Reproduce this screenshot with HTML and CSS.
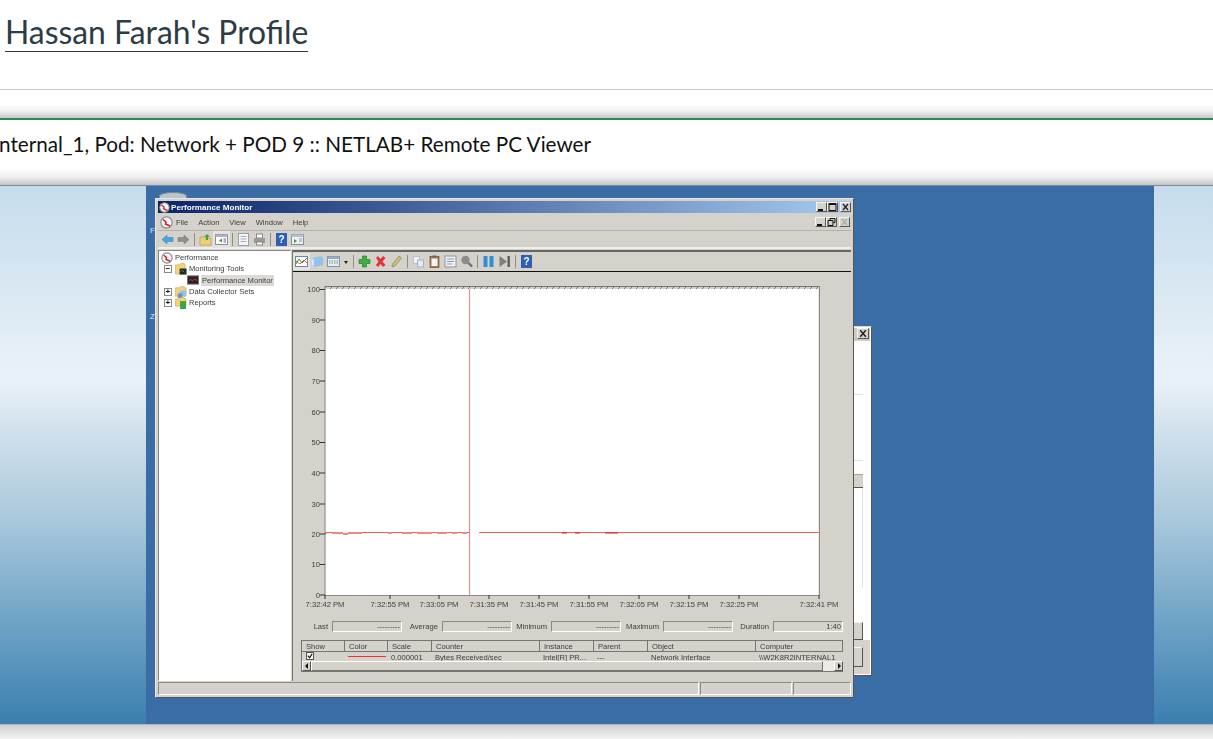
FILE: index.html
```html
<!DOCTYPE html>
<html lang="en">
<head>
    <meta charset="UTF-8">
    <meta name="viewport" content="width=device-width, initial-scale=1.0">
    <title>Hassan Farah's Profile</title>
    <link rel="stylesheet" href="styles.css">
</head>
<body>
    <!-- icon sheet -->
    <svg class="defs" width="0" height="0">
        <defs>
            <pattern id="hatch" width="6" height="3" patternUnits="userSpaceOnUse">
                <path d="M0 3 L3 0" stroke="#777" stroke-width="1" fill="none"/>
            </pattern>
        </defs>
        <symbol id="i-perf" viewBox="0 0 13 13"><circle cx="6.5" cy="6.5" r="5.6" fill="#f4f4f4" stroke="#8c8c8c" stroke-width="1.2"/><path d="M3 3.5 L6 6 L5.5 8 L10 10" fill="none" stroke="#d8202a" stroke-width="1.6"/></symbol>
        <symbol id="i-back" viewBox="0 0 13 13"><path d="M1 6.5 L6 2 V4.5 H12 V8.5 H6 V11 Z" fill="#4ba3e3" stroke="#2f7fbf" stroke-width=".5"/></symbol>
        <symbol id="i-fwd" viewBox="0 0 13 13"><path d="M12 6.5 L7 2 V4.5 H1 V8.5 H7 V11 Z" fill="#8f8f8f" stroke="#777" stroke-width=".5"/></symbol>
        <symbol id="i-up" viewBox="0 0 13 13"><path d="M1 4 H5 L6 5.5 H12 V12 H1 Z" fill="#efcf74" stroke="#b8963c" stroke-width=".6"/><path d="M8 1 L11 4 H9 V7 H7 V4 H5 Z" fill="#3da63d"/></symbol>
        <symbol id="i-tree" viewBox="0 0 13 13"><rect x=".5" y="1.5" width="12" height="10" fill="#fff" stroke="#8a8f96"/><rect x=".5" y="1.5" width="12" height="2.5" fill="#aeb6c2"/><path d="M4 7.5 L7 5.5 V9.5 Z" fill="#37a037"/><rect x="8.5" y="5" width="2.5" height="5" fill="#9fb4cc"/></symbol>
        <symbol id="i-sheet" viewBox="0 0 13 13"><rect x="1.5" y=".5" width="10" height="12" fill="#f6f6f6" stroke="#9aa0a8"/><path d="M3.5 3.5 H9.5 M3.5 6 H9.5 M3.5 8.5 H9.5" stroke="#9db0c6"/></symbol>
        <symbol id="i-print" viewBox="0 0 13 13"><rect x="3.5" y="1" width="6" height="4" fill="#fff" stroke="#888"/><rect x="1" y="5" width="11" height="5" fill="#999"/><rect x="3.5" y="9" width="6" height="3" fill="#fff" stroke="#888"/></symbol>
        <symbol id="i-mmc" viewBox="0 0 13 13"><rect x=".5" y="1.5" width="12" height="10" fill="#eef1f4" stroke="#8a8f96"/><rect x=".5" y="1.5" width="12" height="2.5" fill="#b9c0ca"/><path d="M3 6 L6 8 L3 10 Z" fill="#37a037"/><path d="M8 6 H11 M8 8 H11" stroke="#8a9bb2"/></symbol>
        <symbol id="i-graph" viewBox="0 0 13 13"><rect x=".5" y="1.5" width="12" height="10" fill="#fff" stroke="#6c86a6"/><path d="M1 9 L4 4 L7 8 L12 3" fill="none" stroke="#2c9a38"/><path d="M1 6 L5 9 L9 5 L12 8" fill="none" stroke="#d8302a" stroke-width=".8"/></symbol>
        <symbol id="i-histo" viewBox="0 0 13 13"><path d="M1 3 L10 1 L12 3 V10 L3 12 L1 10 Z" fill="#8fc3ea"/><path d="M1 3 L3 5 V12 L1 10 Z" fill="#d2e6f5"/></symbol>
        <symbol id="i-report" viewBox="0 0 13 13"><rect x=".5" y="1.5" width="12" height="10" fill="#e9edf3" stroke="#7f94b0"/><rect x=".5" y="1.5" width="12" height="2.5" fill="#9aa8bd"/><path d="M2 6 H11 M2 8 H11" stroke="#5aa05a" stroke-dasharray="1.5 1"/></symbol>
        <symbol id="i-add" viewBox="0 0 13 13"><path d="M4.500 1 H8.500 V4.500 H12 V8.500 H8.500 V12 H4.500 V8.500 H1 V4.500 H4.500 Z" fill="#3cb043" stroke="#25802c" stroke-width=".7"/></symbol>
        <symbol id="i-del" viewBox="0 0 13 13"><path d="M2 3 L4 1 L6.500 4 L9 1 L11.500 3 L8.500 6.500 L11.500 10 L9 12 L6.500 9 L4 12 L2 10 L4.500 6.500 Z" fill="#e2333a"/></symbol>
        <symbol id="i-pen" viewBox="0 0 13 13"><path d="M9 1 L11.500 3 L5 11 L2 12 L2.500 9 Z" fill="#c9c65a" stroke="#7d8a96" stroke-width=".8"/></symbol>
        <symbol id="i-copy" viewBox="0 0 13 13"><rect x="1.500" y="1.500" width="6" height="7" fill="#f3f3f3" stroke="#bcc0c6"/><rect x="5.500" y="5" width="6" height="7" fill="#e2e9f2" stroke="#a5b3c6"/></symbol>
        <symbol id="i-paste" viewBox="0 0 13 13"><rect x="2" y="1.500" width="9" height="11" fill="#a9794b" stroke="#6f4f30" stroke-width=".7"/><rect x="3.500" y="3.500" width="6" height="7.500" fill="#f4f4f4"/><rect x="4.500" y=".5" width="4" height="2" fill="#666"/></symbol>
        <symbol id="i-props" viewBox="0 0 13 13"><rect x="1" y="1" width="11" height="11" fill="#eceef1" stroke="#8f959e"/><path d="M3 4 H10 M3 6.500 H10 M3 9 H8" stroke="#8aa1bd"/></symbol>
        <symbol id="i-zoom" viewBox="0 0 13 13"><circle cx="5.500" cy="5" r="4.200" fill="#8c8c8c"/><path d="M8.500 8 L12 11.500" stroke="#6d6d6d" stroke-width="2.400"/></symbol>
        <symbol id="i-pause" viewBox="0 0 13 13"><rect x="1.500" y="1" width="4" height="11" fill="#2f8fd0"/><rect x="7.500" y="1" width="4" height="11" fill="#2f8fd0"/></symbol>
        <symbol id="i-next" viewBox="0 0 13 13"><path d="M1.500 1 L9 6.500 L1.500 12 Z" fill="#7f7f7f"/><rect x="9.500" y="1" width="2.400" height="11" fill="#5d5d5d"/></symbol>
        <symbol id="i-mon" viewBox="0 0 13 13"><path d="M.5 2 H5 L6 .5 H10 V2 H11 V12 H.5 Z" fill="#f2d27a" stroke="#c2a24d" stroke-width=".6"/><rect x="5" y="6" width="7.500" height="6.500" fill="#1e2a24"/><path d="M6 9 L8 8 L10 10" stroke="#5fd35f" fill="none" stroke-width=".7"/></symbol>
        <symbol id="i-pmon" viewBox="0 0 13 13"><rect x=".5" y="2" width="12" height="9" fill="#2b2322" stroke="#777"/><path d="M2 7 L4 6 L6 7.500 L8 5.500 L11 7" stroke="#e03a3a" fill="none"/></symbol>
        <symbol id="i-sets" viewBox="0 0 13 13"><path d="M.5 2 H5 L6 .5 H10 V2 H12 V11 H.5 Z" fill="#f2d27a" stroke="#c2a24d" stroke-width=".6"/><rect x="5" y="5" width="7" height="6" fill="#8fc3ea"/><rect x="3" y="8" width="5" height="5" fill="#5c9bd0"/></symbol>
        <symbol id="i-reports" viewBox="0 0 13 13"><path d="M.5 2 H5 L6 .5 H10 V2 H12 V10 H.5 Z" fill="#f2d27a" stroke="#c2a24d" stroke-width=".6"/><rect x="6" y="5" width="5.500" height="8" fill="#2fae3f" stroke="#1d7a2a" stroke-width=".5"/></symbol>
        <symbol id="g-min" viewBox="0 0 9 8"><rect x="1" y="6" width="5" height="2" fill="#111"/></symbol>
        <symbol id="g-max" viewBox="0 0 9 8"><path d="M1 .5 H8 V7.500 H1 Z M1 1.500 H8" fill="none" stroke="#111"/></symbol>
        <symbol id="g-close" viewBox="0 0 9 8"><path d="M2 1 L7 7 M7 1 L2 7" stroke="#222" stroke-width="1.300"/></symbol>
        <symbol id="g-closeoff" viewBox="0 0 9 8"><path d="M2 1 L7 7 M7 1 L2 7" stroke="#aaa" stroke-width="1.300"/></symbol>
        <symbol id="g-restore" viewBox="0 0 9 8"><path d="M3 2 V.5 H8 V4.500 H6.500 M1 2.500 H6 V7.500 H1 Z" fill="none" stroke="#111"/></symbol>
        <symbol id="g-check" viewBox="0 0 7 7"><path d="M1 3 L3 5.500 L6 1" fill="none" stroke="#111" stroke-width="1.400"/></symbol>
    </svg>

    <header class="profile-head">
        <h1><a href="#">Hassan Farah's Profile</a></h1>
    </header>
    <div class="shade"></div>

    <section class="viewer">
        <div class="viewer-title">nternal_1, Pod: Network + POD 9 :: NETLAB+ Remote PC Viewer</div>

        <div class="stage">
            <div class="band band-left"></div>
            <div class="desktop">
                <div class="bin"></div>
                <span class="desk-label label-f">F</span>
                <span class="desk-label label-z">Z</span>

                <!-- window behind perfmon -->
                <div class="back-win">
                    <div class="back-title"><span class="cap-btn"><svg><use href="#g-close"/></svg></span></div>
                    <div class="back-body">
                        <div class="back-rule rule-a"></div>
                        <div class="back-rule rule-b"></div>
                        <div class="back-box"></div>
                        <div class="back-line"></div>
                        <div class="back-btn btn-a"></div>
                    </div>
                    <div class="back-foot">
                        <div class="back-btn btn-b"></div>
                    </div>
                </div>

                <div class="win">
                    <div class="win-title">
                        <svg class="ic"><use href="#i-perf"/></svg>
                        <span class="win-name">Performance Monitor</span>
                        <div class="cap-btns">
                            <span class="cap-btn"><svg><use href="#g-min"/></svg></span>
                            <span class="cap-btn"><svg><use href="#g-max"/></svg></span>
                            <span class="cap-btn gap-left"><svg><use href="#g-close"/></svg></span>
                        </div>
                    </div>

                    <div class="menubar">
                        <svg class="ic menu-ic"><use href="#i-perf"/></svg>
                        <span>File</span>
                        <span>Action</span>
                        <span>View</span>
                        <span>Window</span>
                        <span>Help</span>
                        <div class="cap-btns mdi-btns">
                            <span class="cap-btn"><svg><use href="#g-min"/></svg></span>
                            <span class="cap-btn"><svg><use href="#g-restore"/></svg></span>
                            <span class="cap-btn gap-left"><svg><use href="#g-closeoff"/></svg></span>
                        </div>
                    </div>

                    <div class="toolbar main-bar">
                        <svg class="ic"><use href="#i-back"/></svg>
                        <svg class="ic"><use href="#i-fwd"/></svg>
                        <i class="sep"></i>
                        <svg class="ic"><use href="#i-up"/></svg>
                        <svg class="ic on"><use href="#i-tree"/></svg>
                        <i class="sep"></i>
                        <svg class="ic"><use href="#i-sheet"/></svg>
                        <svg class="ic"><use href="#i-print"/></svg>
                        <i class="sep"></i>
                        <span class="help-ic">?</span>
                        <svg class="ic"><use href="#i-mmc"/></svg>
                    </div>

                    <div class="panes">
                        <div class="tree">
                            <div class="node"><svg class="ic"><use href="#i-perf"/></svg>Performance</div>
                            <div class="node lvl1"><b class="exp">&minus;</b><svg class="ic"><use href="#i-mon"/></svg>Monitoring Tools</div>
                            <div class="node lvl2"><svg class="ic"><use href="#i-pmon"/></svg><span class="picked">Performance Monitor</span></div>
                            <div class="node lvl1"><b class="exp">+</b><svg class="ic"><use href="#i-sets"/></svg>Data Collector Sets</div>
                            <div class="node lvl1"><b class="exp">+</b><svg class="ic"><use href="#i-reports"/></svg>Reports</div>
                        </div>

                        <div class="pane">
                            <div class="toolbar pane-bar">
                                <svg class="ic on"><use href="#i-graph"/></svg>
                                <svg class="ic"><use href="#i-histo"/></svg>
                                <svg class="ic"><use href="#i-report"/></svg>
                                <i class="caret"></i>
                                <i class="sep"></i>
                                <svg class="ic"><use href="#i-add"/></svg>
                                <svg class="ic"><use href="#i-del"/></svg>
                                <svg class="ic"><use href="#i-pen"/></svg>
                                <i class="sep"></i>
                                <svg class="ic"><use href="#i-copy"/></svg>
                                <svg class="ic"><use href="#i-paste"/></svg>
                                <svg class="ic"><use href="#i-props"/></svg>
                                <svg class="ic"><use href="#i-zoom"/></svg>
                                <i class="sep"></i>
                                <svg class="ic"><use href="#i-pause"/></svg>
                                <svg class="ic"><use href="#i-next"/></svg>
                                <i class="sep"></i>
                                <span class="help-ic">?</span>
                            </div>

                            <svg class="chart" width="558" height="340" viewBox="0 0 558 340">
                                <rect x="32" y="14" width="494" height="3" fill="url(#hatch)"/>
                                <path d="M32 14.500 H526" stroke="#777"/>
                                <rect x="32.500" y="17" width="493" height="306" fill="#fff"/>
                                <path d="M32 14 V323.500 H526.500 V14" fill="none" stroke="#8a8a8a"/>
                                <path class="ticks" d="M27 17.500 H32 M27 48 H32 M27 78.500 H32 M27 109 H32 M27 140 H32 M27 170.500 H32 M27 201 H32 M27 232 H32 M27 262 H32 M27 292.500 H32 M27 323 H32 M32 323 V327 M97 323 V327 M146 323 V327 M196 323 V327 M246 323 V327 M296 323 V327 M346 323 V327 M396 323 V327 M446 323 V327 M526 323 V327"/>
                                <path d="M176.500 17 V323" stroke="#ea8e96" stroke-width="1.200"/>
                                <path d="M32 261 H34 M39 261 H50 M55 261 H69 M95 261 H99 M109 261 H119 M124 261 H139 M144 261 H154 M159 261 H164 M169 261 H174" stroke="#e81010" fill="none" stroke-width="1.200"/>
                                <path d="M50 262 H55" stroke="#e81010"/>
                                <path d="M34 260.500 H39 M69 260.500 H95 M99 260.500 H109 M119 260.500 H124 M139 260.500 H144 M154 260.500 H159 M164 260.500 H169 M174 260.500 H176 M186 260.500 H526" stroke="#ff5a5a" fill="none" stroke-width="1.200"/>
                                <path d="M269 261 H274 M282 261 H287 M312 261 H325" stroke="#e81010"/>
                                <g class="y-labels">
                                    <text x="27" y="20">100</text><text x="27" y="51">90</text><text x="27" y="81">80</text><text x="27" y="112">70</text><text x="27" y="143">60</text><text x="27" y="173">50</text><text x="27" y="204">40</text><text x="27" y="235">30</text><text x="27" y="265">20</text><text x="27" y="295">10</text><text x="27" y="326">0</text>
                                </g>
                                <g class="x-labels">
                                    <text x="32" y="335">7:32:42 PM</text><text x="97" y="335">7:32:55 PM</text><text x="146" y="335">7:33:05 PM</text><text x="196" y="335">7:31:35 PM</text><text x="246" y="335">7:31:45 PM</text><text x="296" y="335">7:31:55 PM</text><text x="346" y="335">7:32:05 PM</text><text x="396" y="335">7:32:15 PM</text><text x="446" y="335">7:32:25 PM</text><text x="526" y="335">7:32:41 PM</text>
                                </g>
                            </svg>

                            <div class="stats">
                                <div class="stat"><span>Last</span><span class="val">---------</span></div>
                                <div class="stat"><span>Average</span><span class="val">---------</span></div>
                                <div class="stat"><span>Minimum</span><span class="val">---------</span></div>
                                <div class="stat"><span>Maximum</span><span class="val">---------</span></div>
                                <div class="stat"><span>Duration</span><span class="val">1:40</span></div>
                            </div>

                            <div class="legend">
                                <div class="legend-grid">
                                    <div class="th">Show</div><div class="th">Color</div><div class="th">Scale</div><div class="th">Counter</div><div class="th">Instance</div><div class="th">Parent</div><div class="th">Object</div><div class="th">Computer</div>
                                    <div class="td"><span class="check"><svg><use href="#g-check"/></svg></span></div><div class="td"><span class="swatch"></span></div><div class="td">0.000001</div><div class="td">Bytes Received/sec</div><div class="td">Intel[R] PR...</div><div class="td">---</div><div class="td">Network Interface</div><div class="td clip">\\W2K8R2INTERNAL1</div>
                                </div>
                                <div class="scroll">
                                    <span class="arrow arrow-l"></span>
                                    <span class="thumb"></span>
                                    <span class="track"></span>
                                    <span class="arrow arrow-r"></span>
                                </div>
                            </div>
                        </div>
                    </div>

                    <div class="status">
                        <span class="cell cell-wide"></span>
                        <span class="cell cell-mid"></span>
                        <span class="cell cell-end"></span>
                    </div>
                </div>
            </div>
            <div class="band band-right"></div>
        </div>
    </section>
    <div class="foot"></div>
</body>
</html>
```

FILE: styles.css
```css
html, body {
    margin: 0;
    padding: 0;
    height: 739px;
    overflow: hidden;
    background: white;
}
body {
    font-family: "Lato", "Liberation Sans", sans-serif;
    color: #2d3b45;
}
.defs {
    display: block;
    height: 0;
}

/* page chrome */
.profile-head {
    height: 89px;
    border-bottom: 1px solid #cccccc;
    box-sizing: content-box;
    padding-left: 5px;
}
.profile-head h1 {
    margin: 0;
    padding-top: 13px;
    font-size: 31.850px;
    font-weight: 400;
    line-height: 38px;
}
.profile-head a {
    color: #2d3b45;
    text-decoration: none;
    border-bottom: 1px solid #2d3b45;
    display: inline-block;
    line-height: 37px;
}
.shade {
    height: 28px;
    background: linear-gradient(to bottom, #ffffff 0%, #ffffff 50%, #f0f0f0 75%, #c8c8c8 100%);
}
.viewer {
    border-top: 2px solid #2b8a4f;
}
.viewer-title {
    height: 65px;
    box-sizing: border-box;
    padding: 11px 0 0 0;
    margin-left: -1px;
    font-size: 20.700px;
    line-height: 26px;
    color: #111111;
    white-space: nowrap;
    background: linear-gradient(to bottom, #ffffff 0%, #ffffff 74%, #eeeeee 88%, #c4c4c4 100%);
}
.foot {
    height: 15px;
    border-top: 1px solid #aeb4ba;
    background: linear-gradient(to bottom, #cfcfcf, #f6f6f6);
}

/* remote desktop area */
.stage {
    display: flex;
    height: 539px;
    border-top: 1px solid #7b8b9b;
    box-sizing: border-box;
}
.band {
    background: linear-gradient(to bottom, #c6dcec 0%, #eaf2f9 36%, #cfe0ec 46%, #a9c8dc 62%, #72a5c7 80%, #3a7fb0 100%);
}
.band-left {
    width: 146px;
}
.band-right {
    width: 59px;
}
.desktop {
    position: relative;
    width: 1008px;
    background: #3a6ca5;
}
.bin {
    position: absolute;
    left: 13px;
    top: 6px;
    width: 26px;
    height: 12px;
    border-radius: 50% / 30%;
    background: #b9c4cf;
    border: 1px solid #7e8a96;
}
.desk-label {
    position: absolute;
    left: 4px;
    font: 8px "Liberation Sans", sans-serif;
    color: #dfe8f2;
}
.label-f { top: 40px; }
.label-z { top: 126px; }

/* main window */
.win {
    position: absolute;
    left: 9px;
    top: 12px;
    width: 699px;
    height: 500px;
    box-sizing: border-box;
    display: flex;
    flex-direction: column;
    padding: 2px;
    background: #d5d2cc;
    border: 1px solid;
    border-color: #e8e6e2 #555555 #555555 #e8e6e2;
    font-family: "Liberation Sans", sans-serif;
    font-size: 7.600px;
    color: #3c3c3c;
    filter: blur(0.35px);
}
.win-title {
    display: flex;
    align-items: center;
    height: 12px;
    flex: none;
    background: linear-gradient(to right, #0a246a, #a6caf0);
    color: white;
    font-weight: 700;
    font-size: 8.100px;
}
.win-title .ic {
    width: 11px;
    height: 11px;
    margin: 0 1px 0 1px;
}
.ic {
    width: 13px;
    height: 13px;
    flex: none;
}
.help-ic {
    width: 11px;
    height: 13px;
    margin: 0 1px;
    flex: none;
    background: #2f5fb0;
    color: white;
    font-size: 10px;
    font-weight: 700;
    line-height: 13px;
    text-align: center;
}
.cap-btns {
    display: flex;
    margin-left: auto;
}
.cap-btn {
    display: block;
    width: 9px;
    height: 8px;
    background: #d5d2cc;
    border: 1px solid;
    border-color: #f4f4f4 #555555 #555555 #f4f4f4;
}
.cap-btn svg {
    display: block;
    width: 9px;
    height: 8px;
}
.gap-left {
    margin-left: 2px;
}
.menubar {
    display: flex;
    align-items: center;
    gap: 10px;
    height: 17px;
    margin-top: 1px;
    padding-left: 2px;
    flex: none;
    border-bottom: 1px solid #b5b2ac;
    box-sizing: border-box;
}
.menu-ic {
    margin-right: -7px;
}
.mdi-btns {
    margin-right: 1px;
}
.toolbar {
    display: flex;
    align-items: center;
    gap: 3px;
    flex: none;
}
.main-bar {
    height: 18px;
    padding-left: 3px;
    border-bottom: 2px solid #eeeeee;
    box-sizing: border-box;
}
.ic.on {
    outline: 2px solid #e6e4e0;
    background: #e6e4e0;
}
.sep {
    width: 1px;
    height: 13px;
    margin: 0 1px;
    background: #8f8d88;
}
.caret {
    width: 6px;
    height: 3px;
    position: relative;
    top: 1px;
}
.caret::before {
    content: "";
    display: block;
    margin-left: 1px;
    border: 2px solid transparent;
    border-top: 3px solid #222222;
    border-bottom: 0;
    width: 0;
}
.panes {
    display: flex;
    flex: 1;
    min-height: 0;
    margin-top: 1px;
}

/* tree */
.tree {
    width: 131px;
    flex: none;
    background: white;
    border: 1px solid;
    border-color: #8a8884 #ffffff #ffffff #8a8884;
    box-sizing: content-box;
    padding-top: 1px;
}
.node {
    display: flex;
    align-items: center;
    height: 11.300px;
    padding-left: 2px;
    white-space: nowrap;
}
.node .ic {
    width: 12px;
    height: 12px;
    margin-right: 2px;
}
.lvl1 {
    padding-left: 5px;
}
.lvl2 {
    padding-left: 28px;
}
.exp {
    width: 6px;
    height: 6px;
    margin-right: 3px;
    border: 1px solid #8a8a8a;
    font: 700 8px/6px "Liberation Mono", monospace;
    text-align: center;
    color: #111111;
    flex: none;
}
.picked {
    background: #dcdad6;
    padding: 1px;
}

/* right side */
.pane {
    flex: 1;
    min-width: 0;
    margin-left: 1px;
    border-left: 1px solid #777571;
    display: flex;
    flex-direction: column;
}
.pane-bar {
    height: 22px;
    padding-left: 2px;
    box-sizing: border-box;
    border-top: 2px solid #666666;
    border-bottom: 1px solid #111111;
}
.chart {
    display: block;
    flex: none;
}
.ticks {
    stroke: #333333;
    fill: none;
}
.y-labels text,
.x-labels text {
    font-size: 7.600px;
    fill: #3c3c3c;
}
.y-labels text {
    text-anchor: end;
}
.x-labels text {
    text-anchor: middle;
}
.stats {
    display: grid;
    grid-template-columns: 101px 110px 109px 112px 110px;
    margin: 9px 0 0 8px;
    height: 11px;
    flex: none;
}
.stat {
    display: flex;
    justify-content: flex-end;
    align-items: center;
    gap: 4px;
}
.val {
    width: 70px;
    height: 11px;
    box-sizing: border-box;
    border: 1px solid;
    border-color: #8a8884 #ffffff #ffffff #8a8884;
    text-align: right;
    line-height: 9px;
    padding-right: 1px;
}
.legend {
    width: 542px;
    margin: 8px 0 0 8px;
    border: 1px solid #777571;
    border-width: 1px 0 1px 1px;
    box-sizing: border-box;
}
.legend-grid {
    display: grid;
    grid-template-columns: 43px 43px 44px 108px 54px 54px 108px 87px;
    grid-template-rows: 11px 9px;
}
.th {
    border-right: 1px solid #777571;
    border-bottom: 1px solid #777571;
    padding-left: 4px;
    line-height: 11px;
}
.td {
    padding-left: 3px;
    line-height: 11px;
    height: 9px;
    white-space: nowrap;
}
.clip {
    overflow: visible;
}
.check {
    display: block;
    width: 6px;
    height: 6px;
    margin: 0 0 0 1px;
    background: white;
    border: 1px solid #555555;
}
.check svg {
    display: block;
    width: 6px;
    height: 6px;
}
.swatch {
    display: block;
    width: 38px;
    height: 1px;
    margin: 4px 0 0 0;
    background: #ff2a2a;
}
.scroll {
    display: flex;
    height: 10px;
    align-items: stretch;
}
.arrow {
    width: 9px;
    flex: none;
    position: relative;
    background: #d5d2cc;
    border: 1px solid;
    border-color: #ffffff #555555 #555555 #ffffff;
    box-sizing: border-box;
}
.arrow::before {
    content: "";
    position: absolute;
    top: 1px;
    border: 3px solid transparent;
}
.arrow-l::before {
    left: -1px;
    border-right-color: #111111;
}
.arrow-r::before {
    left: 3px;
    border-left-color: #111111;
}
.thumb {
    flex: 1;
    border: 1px solid;
    border-color: #ffffff #777571 #777571 #ffffff;
}
.track {
    width: 11px;
    background-color: #ecebe8;
    background-image: radial-gradient(#cfcdc8 35%, transparent 40%);
    background-size: 2px 2px;
}
.status {
    display: flex;
    gap: 1px;
    height: 13px;
    margin-top: 1px;
    flex: none;
}
.cell {
    box-sizing: border-box;
    border: 1px solid;
    border-color: #8a8884 #ffffff #ffffff #8a8884;
}
.cell-wide { width: 541px; }
.cell-mid { width: 92px; }
.cell-end { width: 58px; }

/* window behind */
.back-win {
    position: absolute;
    left: 692px;
    top: 140px;
    width: 34px;
    height: 350px;
    box-sizing: border-box;
    padding: 1px;
    display: flex;
    flex-direction: column;
    background: white;
    border: 1px solid;
    border-color: #d8d6d2 #555555 #555555 #d8d6d2;
    filter: blur(0.25px);
}
.back-title {
    display: flex;
    justify-content: flex-end;
    height: 13px;
    padding-right: 1px;
    background: #cdcac4;
    flex: none;
}
.back-title .cap-btn {
    width: 10px;
    height: 9px;
}
.back-title svg {
    width: 10px;
    height: 9px;
}
.back-body {
    flex: 1;
    background: white;
    overflow: hidden;
}
.back-rule {
    height: 1px;
    width: 23px;
    background: #e2e2e2;
}
.rule-a { margin-top: 53px; }
.rule-b { margin-top: 65px; }
.back-box {
    width: 23px;
    height: 14px;
    margin-top: 13px;
    background: #d5d2cc;
    border-bottom: 1px solid #555555;
    border-top: 1px solid #a8a6a1;
    box-sizing: border-box;
}
.back-line {
    height: 100px;
    width: 22px;
    border-right: 1px solid #e2e2e2;
}
.back-btn {
    box-sizing: border-box;
    width: 23px;
    background: #d5d2cc;
    border: 1px solid;
    border-color: #f4f4f4 #555555 #555555 #f4f4f4;
}
.btn-a {
    height: 18px;
    margin-top: 34px;
}
.btn-b {
    height: 20px;
    margin-top: 7px;
}
.back-foot {
    height: 34px;
    flex: none;
    background: #d5d2cc;
}
```
